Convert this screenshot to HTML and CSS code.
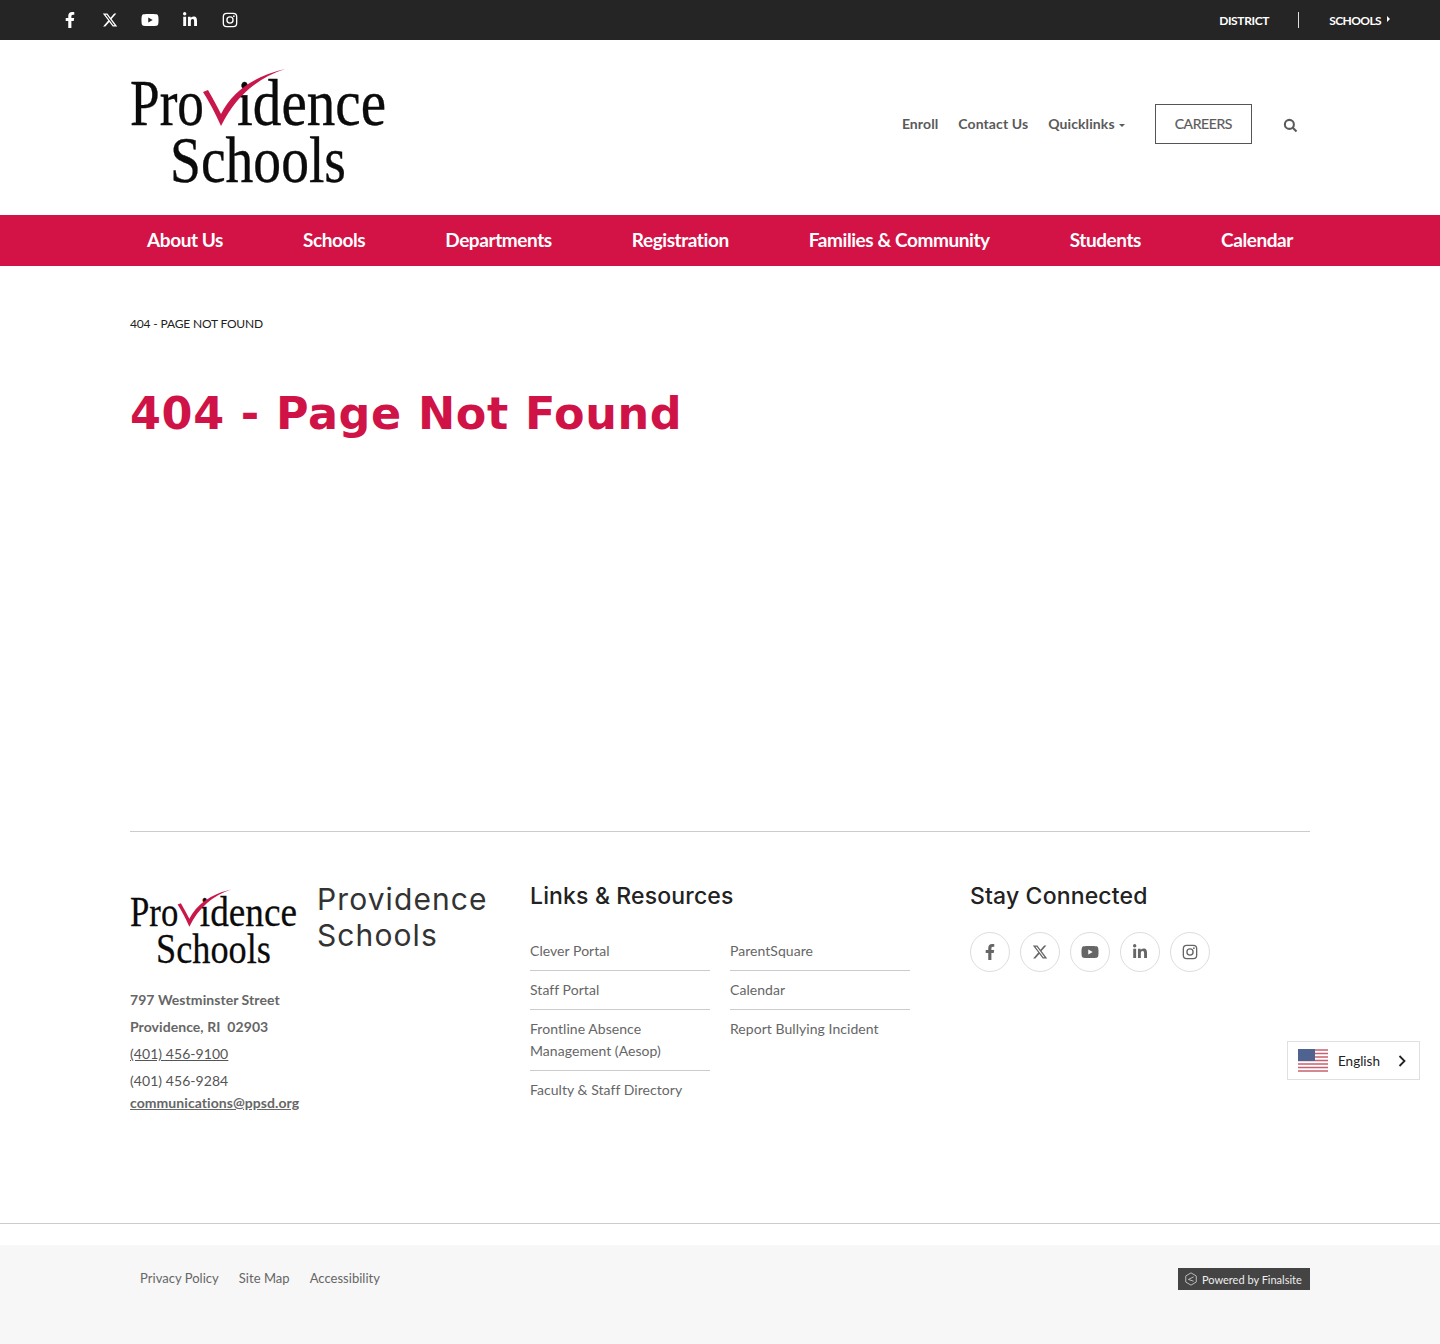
FILE: index.html
```html
<!DOCTYPE html>
<html lang="en">
<head>
    <meta charset="UTF-8">
    <title>404 - Page Not Found - Providence Schools</title>
    <meta name="viewport" content="width=device-width, initial-scale=1.0">
    <link rel="stylesheet" href="styles.css">
</head>
<body>
    <!-- shared icons -->
    <svg class="defs" width="0" height="0" aria-hidden="true">
        <symbol id="i-facebook" viewBox="0 0 320 512"><path d="M279.14 288l14.22-92.66h-88.91v-60.13c0-25.35 12.42-50.06 52.24-50.06h40.42V6.26S260.43 0 225.36 0c-73.22 0-121.08 44.38-121.08 124.72v70.62H22.89V288h81.39v224h100.17V288z"/></symbol>
        <symbol id="i-x" viewBox="0 0 512 512"><path d="M389.2 48h70.6L305.6 224.2 487 464H345L233.7 318.6 106.5 464H35.8L200.7 275.5 26.8 48H172.4L272.9 180.9 389.2 48zM364.4 421.8h39.1L151.1 88h-42L364.4 421.8z"/></symbol>
        <symbol id="i-youtube" viewBox="0 0 576 512"><path d="M549.655 124.083c-6.281-23.65-24.787-42.276-48.284-48.597C458.781 64 288 64 288 64S117.22 64 74.629 75.486c-23.497 6.322-42.003 24.947-48.284 48.597-11.412 42.867-11.412 132.305-11.412 132.305s0 89.438 11.412 132.305c6.281 23.65 24.787 41.5 48.284 47.821C117.22 448 288 448 288 448s170.78 0 213.371-11.486c23.497-6.321 42.003-24.171 48.284-47.821 11.412-42.867 11.412-132.305 11.412-132.305s0-89.438-11.412-132.305zm-317.51 213.508V175.185l142.739 81.205-142.739 81.201z"/></symbol>
        <symbol id="i-linkedin" viewBox="0 0 448 512"><path d="M100.28 448H7.4V148.9h92.88zM53.79 108.1C24.09 108.1 0 83.5 0 53.8a53.79 53.79 0 0 1 107.58 0c0 29.7-24.1 54.3-53.79 54.3zM447.9 448h-92.68V302.4c0-34.7-.7-79.2-48.29-79.2-48.29 0-55.69 37.7-55.69 76.7V448h-92.78V148.9h89.08v40.8h1.3c12.4-23.5 42.69-48.3 87.88-48.3 94 0 111.28 61.9 111.28 142.3V448z"/></symbol>
        <symbol id="i-instagram" viewBox="0 0 24 24"><rect x="2" y="2" width="20" height="20" rx="5" fill="none" stroke="currentColor" stroke-width="2"/><circle cx="12" cy="12" r="4.6" fill="none" stroke="currentColor" stroke-width="2"/><circle cx="17.8" cy="6.2" r="1.3"/></symbol>
    </svg>

    <div class="topbar">
        <div class="topbar-social">
            <a href="#"><svg class="icon"><use href="#i-facebook"/></svg></a>
            <a href="#"><svg class="icon"><use href="#i-x"/></svg></a>
            <a href="#"><svg class="icon icon-yt"><use href="#i-youtube"/></svg></a>
            <a href="#"><svg class="icon"><use href="#i-linkedin"/></svg></a>
            <a href="#"><svg class="icon"><use href="#i-instagram"/></svg></a>
        </div>
        <div class="topbar-links">
            <a href="#">District</a>
            <span class="topbar-divider"></span>
            <a href="#" class="topbar-schools">Schools</a>
        </div>
    </div>

    <header class="site-header">
        <a href="#" class="site-logo">
            <svg class="logo-main" viewBox="0 0 256 120" role="img" aria-label="Providence Schools">
                <text class="logo-text" x="0" y="57" textLength="74" lengthAdjust="spacingAndGlyphs">Pro</text>
                <text class="logo-text" x="107" y="57" textLength="149" lengthAdjust="spacingAndGlyphs">idence</text>
                <text class="logo-text" x="40" y="114" textLength="176" lengthAdjust="spacingAndGlyphs">Schools</text>
                <path class="logo-check" d="M73 24 L78 22 Q86 36 91 46 Q108 12 155 1 Q112 15 91 58 Q82 38 73 24Z"/>
            </svg>
        </a>
        <nav class="utility-nav">
            <a href="#">Enroll</a>
            <a href="#">Contact Us</a>
            <a href="#" class="has-caret">Quicklinks</a>
            <a href="#" class="careers-btn">CAREERS</a>
            <svg class="search-icon" viewBox="0 0 16 16"><circle cx="6.8" cy="6.8" r="4.8"/><line x1="10.4" y1="10.4" x2="14.4" y2="14.4"/></svg>
        </nav>
    </header>

    <nav class="main-nav">
        <a href="#">About Us</a>
        <a href="#">Schools</a>
        <a href="#">Departments</a>
        <a href="#">Registration</a>
        <a href="#">Families &amp; Community</a>
        <a href="#">Students</a>
        <a href="#">Calendar</a>
    </nav>

    <main class="content">
        <div class="breadcrumb">404 - PAGE NOT FOUND</div>
        <h1>404 - Page Not Found</h1>
    </main>

    <footer class="site-footer">
        <div class="footer-cols">
            <div class="footer-about">
                <div class="footer-brand">
                    <svg class="logo-small" viewBox="0 0 256 120" role="img" aria-label="Providence Schools">
                        <text class="logo-text" x="0" y="57" textLength="74" lengthAdjust="spacingAndGlyphs">Pro</text>
                        <text class="logo-text" x="107" y="57" textLength="149" lengthAdjust="spacingAndGlyphs">idence</text>
                        <text class="logo-text" x="40" y="114" textLength="176" lengthAdjust="spacingAndGlyphs">Schools</text>
                        <path class="logo-check" d="M73 24 L78 22 Q86 36 91 46 Q108 12 155 1 Q112 15 91 58 Q82 38 73 24Z"/>
                    </svg>
                    <div class="footer-name">Providence Schools</div>
                </div>
                <div class="address">
                    <div class="addr-line strong">797 Westminster Street</div>
                    <div class="addr-line strong">Providence, RI&nbsp; 02903</div>
                    <div class="addr-line"><a href="#">(401) 456-9100</a></div>
                    <div class="addr-line">(401) 456-9284</div>
                    <div class="addr-mail"><a href="#">communications@ppsd.org</a></div>
                </div>
            </div>
            <div class="footer-links">
                <h2>Links &amp; Resources</h2>
                <div class="link-cols">
                    <ul>
                        <li><a href="#">Clever Portal</a></li>
                        <li><a href="#">Staff Portal</a></li>
                        <li><a href="#">Frontline Absence Management (Aesop)</a></li>
                        <li><a href="#">Faculty &amp; Staff Directory</a></li>
                    </ul>
                    <ul>
                        <li><a href="#">ParentSquare</a></li>
                        <li><a href="#">Calendar</a></li>
                        <li><a href="#">Report Bullying Incident</a></li>
                    </ul>
                </div>
            </div>
            <div class="footer-social">
                <h2>Stay Connected</h2>
                <div class="circle-row">
                    <a href="#"><svg class="icon"><use href="#i-facebook"/></svg></a>
                    <a href="#"><svg class="icon"><use href="#i-x"/></svg></a>
                    <a href="#"><svg class="icon icon-yt"><use href="#i-youtube"/></svg></a>
                    <a href="#"><svg class="icon"><use href="#i-linkedin"/></svg></a>
                    <a href="#"><svg class="icon"><use href="#i-instagram"/></svg></a>
                </div>
            </div>
        </div>
    </footer>

    <div class="bottom-rule"></div>
    <div class="bottom-bar">
        <div class="bottom-links">
            <a href="#">Privacy Policy</a>
            <a href="#">Site Map</a>
            <a href="#">Accessibility</a>
        </div>
        <a href="#" class="finalsite-badge">
            <svg viewBox="0 0 16 16"><path d="M8 1l6 3.500v7L8 15l-6-3.500v-7z"/><path d="M11 5.600 5 8.500l6 2"/></svg>
            Powered by Finalsite
        </a>
    </div>

    <!-- translate widget floats over the page -->
    <div class="lang-widget">
        <svg class="flag" viewBox="0 0 30 23">
            <rect width="30" height="23" fill="#fff"/>
            <path d="M0 1h30M0 4.500h30M0 8h30M0 11.500h30M0 15h30M0 18.500h30M0 22h30" stroke="#c8616f" stroke-width="1.700"/>
            <rect width="17" height="12" fill="#4f6390"/>
        </svg>
        <span>English</span>
        <svg class="chevron" viewBox="0 0 10 14"><path d="M2.500 2l5 5-5 5"/></svg>
    </div>
</body>
</html>
```

FILE: styles.css
```css
body {
    margin: 0;
    font-family: 'Lato', sans-serif;
    background: #fff;
    color: #555;
    font-size: 14px;
    position: relative;
}
a {
    color: inherit;
    text-decoration: none;
}
.defs {
    position: absolute;
}
.icon {
    width: 16px;
    height: 16px;
    fill: currentColor;
}
.icon-yt {
    width: 18px;
    height: 18px;
}

/* top bar */
.topbar {
    height: 40px;
    background: #252525;
    color: #fff;
    display: flex;
    justify-content: space-between;
    align-items: center;
    padding: 0 50px;
}
.topbar-social {
    display: flex;
}
.topbar-social a {
    width: 40px;
    height: 40px;
    display: flex;
    align-items: center;
    justify-content: center;
}
.topbar-links {
    display: flex;
    align-items: center;
    font-size: 12px;
    font-weight: 700;
    text-transform: uppercase;
    letter-spacing: -0.35px;
}
.topbar-divider {
    width: 1px;
    height: 16px;
    background: #ddd;
    margin: 0 30px 0 29px;
}
.topbar-schools {
    display: flex;
    align-items: center;
    letter-spacing: -0.6px;
}
.topbar-schools::after {
    content: "";
    border-left: 3px solid #fff;
    border-top: 3px solid transparent;
    border-bottom: 3px solid transparent;
    margin: -2px 0 0 6px;
}

/* header */
.site-header {
    height: 175px;
    padding: 0 130px;
    display: flex;
    justify-content: space-between;
    align-items: center;
}
.site-logo {
    display: block;
    height: 120px;
}
.logo-main {
    width: 256px;
    height: 120px;
    display: block;
}
.logo-small {
    width: 167px;
    height: 80px;
    flex-shrink: 0;
}
.logo-text {
    font-family: 'Liberation Serif', serif;
    font-size: 66px;
    fill: #0b0b0b;
    stroke: #0b0b0b;
    stroke-width: 0.4;
}
.logo-check {
    fill: #c8174b;
}
.utility-nav {
    display: flex;
    align-items: center;
    font-weight: 700;
    color: #5a5a5a;
    padding-right: 12px;
    gap: 20px;
    margin-top: -7px;
    letter-spacing: 0.1px;
}
.utility-nav a {
    margin-top: -2px;
}
.has-caret::after {
    content: "";
    display: inline-block;
    border-top: 3px solid #5a5a5a;
    border-left: 3px solid transparent;
    border-right: 3px solid transparent;
    margin-left: 4px;
    vertical-align: 2px;
}
.utility-nav .careers-btn {
    border: 1px solid #555;
    padding: 0 19px;
    height: 38px;
    line-height: 38px;
    margin: 0 0 0 10px;
    font-weight: 400;
    letter-spacing: -0.4px;
    -webkit-text-stroke: 0.2px #5a5a5a;
}
.search-icon {
    width: 15px;
    height: 15px;
    margin: 2px 0 0 11px;
    fill: none;
    stroke: #5a5a5a;
    stroke-width: 2.200;
}

/* main nav */
.main-nav {
    height: 51px;
    box-sizing: border-box;
    padding-bottom: 3px;
    background: #d31245;
    display: flex;
    justify-content: center;
    align-items: center;
    gap: 80px;
    color: #fff;
    font-size: 19px;
    font-weight: 700;
    letter-spacing: -0.42px;
}

/* page content */
.content {
    padding: 50px 130px 0;
    height: 515px;
}
.breadcrumb {
    font-size: 12px;
    line-height: 16px;
    color: #222;
    letter-spacing: -0.17px;
}
h1 {
    margin: 52px 0 0;
    font-family: 'DejaVu Sans', sans-serif;
    font-weight: 700;
    font-size: 44.5px;
    letter-spacing: 0.6px;
    line-height: 60px;
    color: #d01347;
}

/* footer */
.site-footer {
    margin: 0 130px;
    border-top: 1px solid #ccc;
    height: 391px;
}
.footer-cols {
    display: flex;
}
.footer-about {
    width: 400px;
    padding-top: 56px;
}
.footer-brand {
    display: flex;
    gap: 20px;
}
.footer-name {
    font-family: 'Inter', sans-serif;
    font-size: 30px;
    line-height: 36px;
    letter-spacing: 1.100px;
    color: #333;
    width: 180px;
    margin-top: -7px;
}
.address {
    margin-top: 18px;
    letter-spacing: 0.06px;
}
.addr-line {
    line-height: 27px;
}
.addr-line.strong,
.addr-mail {
    font-weight: 700;
    color: #666;
}
.addr-line a,
.addr-mail a {
    text-decoration: underline;
}
.addr-mail {
    line-height: 17px;
}
.footer-links {
    width: 440px;
    padding-top: 48px;
}
h2 {
    margin: 0;
    font-family: 'Inter', sans-serif;
    font-weight: 550;
    font-size: 23px;
    line-height: 32px;
    letter-spacing: 0.15px;
    color: #222;
}
.link-cols {
    display: flex;
    gap: 20px;
    margin-top: 20px;
}
.link-cols ul {
    list-style: none;
    margin: 0;
    padding: 0;
    width: 180px;
}
.link-cols li {
    padding: 8px 0;
    line-height: 22px;
    border-bottom: 1px solid #ccc;
    letter-spacing: 0.05px;
    color: #666;
}
.link-cols li:last-child {
    border-bottom: 0;
}
.footer-social {
    padding-top: 48px;
}
.circle-row {
    display: flex;
    gap: 10px;
    margin-top: 20px;
}
.circle-row a {
    width: 38px;
    height: 38px;
    border: 1px solid #ddd;
    border-radius: 50%;
    display: flex;
    align-items: center;
    justify-content: center;
    color: #666;
}

/* bottom bar */
.bottom-rule {
    height: 21px;
    border-top: 1px solid #ccc;
}
.bottom-bar {
    background: #f7f7f7;
    height: 99px;
    padding: 0 130px;
    display: flex;
    justify-content: space-between;
    align-items: flex-start;
}
.bottom-links {
    display: flex;
    gap: 20px;
    padding: 24px 0 0 10px;
    line-height: 18px;
    font-size: 13px;
    letter-spacing: 0.03px;
    color: #666;
}
.finalsite-badge {
    margin-top: 23px;
    height: 22px;
    width: 126px;
    padding-left: 6px;
    background: #444;
    color: #eee;
    font-size: 11px;
    display: flex;
    align-items: center;
    gap: 4px;
}
.finalsite-badge svg {
    width: 14px;
    height: 14px;
    fill: none;
    stroke: #ccc;
    stroke-width: 1;
}

/* language widget */
.lang-widget {
    position: absolute;
    left: 1287px;
    top: 1041px;
    width: 131px;
    height: 37px;
    border: 1px solid #e0e0e0;
    background: #fff;
    display: flex;
    align-items: center;
    color: #222;
    font-size: 13.500px;
}
.flag {
    width: 30px;
    height: 23px;
    margin-left: 10px;
}
.lang-widget span {
    margin-left: 10px;
}
.chevron {
    width: 10px;
    height: 14px;
    margin-left: 17px;
    fill: none;
    stroke: #222;
    stroke-width: 1.800;
}
```
